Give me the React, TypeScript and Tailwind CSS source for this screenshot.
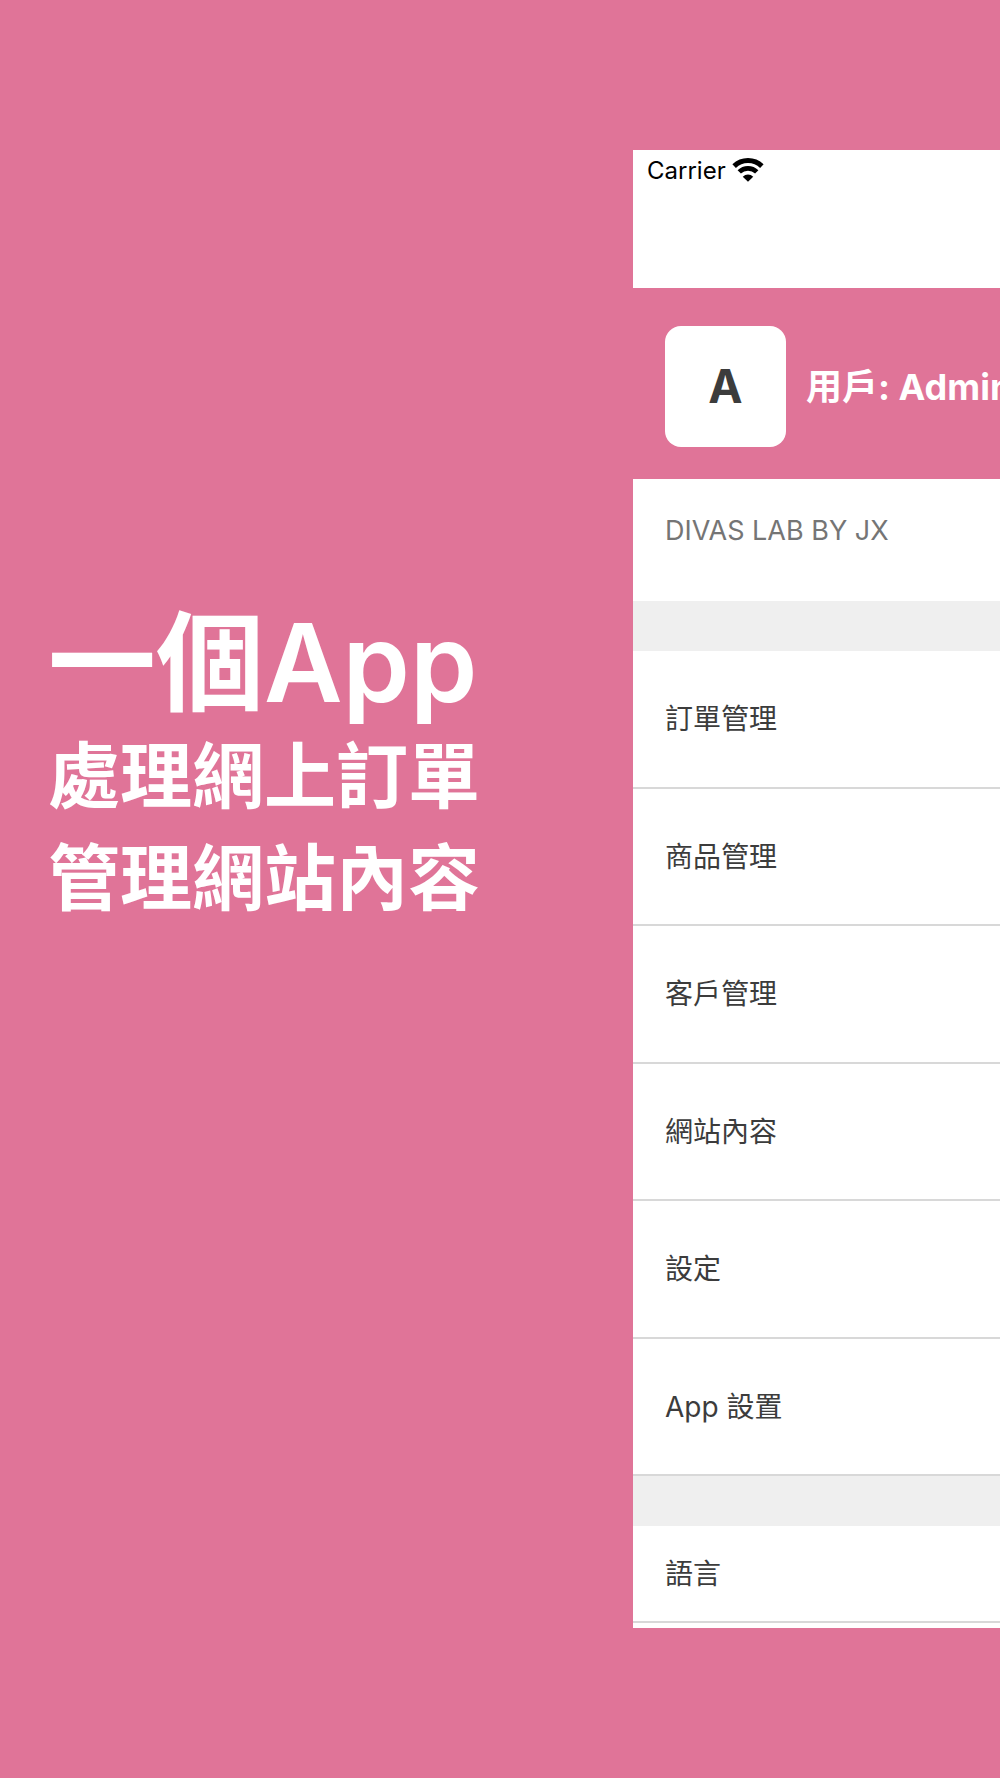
const menuItems = ["訂單管理", "商品管理", "客戶管理", "網站內容", "設定", "App 設置"];

function WifiIcon() {
  return (
    <svg className="w-8 h-6" viewBox="0 0 30 22" fill="none" aria-hidden="true">
      <path
        d="M2 7.4a18.6 18.6 0 0 1 26 0"
        stroke="black"
        strokeWidth="4.7"
      />
      <path d="M6.8 12.8a11.6 11.6 0 0 1 16.4 0" stroke="black" strokeWidth="4.4" />
      <path d="M15 22l-4.9-4.7a7 7 0 0 1 9.8 0z" fill="black" />
    </svg>
  );
}

function MenuItem({ label, className }: { label: string; className: string }) {
  return (
    <a
      href="#"
      className={`flex items-center px-8 pt-px border-b-2 border-[#d8d8d8] text-[28px] leading-9 text-[#3c3c3c] ${className}`}
    >
      {label}
    </a>
  );
}

function App() {
  return (
    <div className="grid grid-cols-[633fr_367fr] min-h-screen py-[150px] bg-[#e07498] font-[Inter,'Noto_Sans_CJK_TC',sans-serif]">
      <div className="flex flex-col pl-12 pt-[451px] text-white font-semibold whitespace-nowrap">
        <h1 className="text-[108px] leading-[124px]">一個App</h1>
        <p className="text-[72px] leading-[102px]">
          處理網上訂單
          <br />
          管理網站內容
        </p>
      </div>
      <div className="flex flex-col bg-white overflow-hidden whitespace-nowrap">
        <div className="flex items-start gap-[6px] h-[138px] pl-[14px] pt-2">
          <span className="text-[24px] leading-[26px] text-black">Carrier</span>
          <WifiIcon />
        </div>
        <div className="flex items-center gap-5 px-8 pt-[38px] pb-8 bg-[#e07498]">
          <div className="flex items-center justify-center shrink-0 w-[121px] h-[121px] rounded-2xl bg-white text-[46px] font-bold text-[#3c3c3c]">
            A
          </div>
          <p className="text-[36px] font-bold text-white">用戶: Admin</p>
        </div>
        <h2 className="h-[122px] px-8 pt-[34px] text-[27px] leading-9 text-[#757575]">
          DIVAS LAB BY JX
        </h2>
        <nav className="flex flex-col flex-1 border-t-[50px] border-[#efefef]">
          {menuItems.map((item) => (
            <MenuItem key={item} label={item} className="flex-1" />
          ))}
        </nav>
        <nav className="border-t-[50px] border-[#efefef] pb-[5px]">
          <MenuItem label="語言" className="h-[97px]" />
        </nav>
      </div>
    </div>
  );
}

export default App;
